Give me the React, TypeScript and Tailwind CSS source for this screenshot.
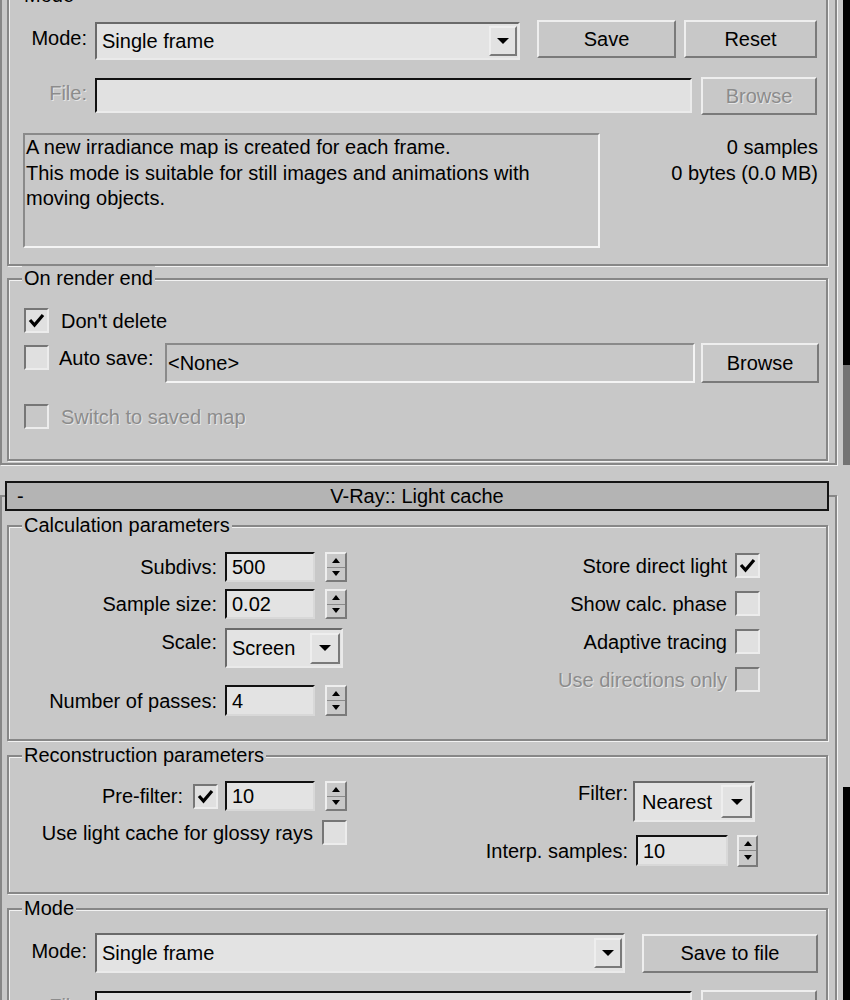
import React from 'react'

const raised = 'border-2 border-t-[#eeeeee] border-l-[#eeeeee] border-b-[#7a7a7a] border-r-[#7a7a7a]'
const dis = 'text-[#8c8c8c] [text-shadow:1px_1px_0_#e6e6e6]'

function Group({ title, className, children }: { title: string; className: string; children?: React.ReactNode }) {
  return (
    <div className={`border-2 border-[#878787] shadow-[inset_1px_1px_0_#f2f2f2,1px_1px_0_#f2f2f2] ${className}`}>
      <div className="-mt-[14px] h-[24px] flex">
        <span className="ml-[13px] px-[2px] bg-[#c8c8c8]">{title}</span>
      </div>
      {children}
    </div>
  )
}

function Btn({ children, className, disabled }: { children: React.ReactNode; className: string; disabled?: boolean }) {
  return (
    <div className={`flex items-center justify-center bg-[#c8c8c8] ${raised} ${disabled ? dis : ''} ${className}`}>
      {children}
    </div>
  )
}

function Tri({ down = true, w = 12, h = 6 }: { down?: boolean; w?: number; h?: number }) {
  return (
    <svg width={w} height={h} viewBox={`0 0 ${w} ${h}`}>
      <polygon points={down ? `0,0 ${w},0 ${w / 2},${h}` : `0,${h} ${w},${h} ${w / 2},0`} fill="#000" />
    </svg>
  )
}

function Drop({ value, className, pad = 'pl-[5px]', btn = 'w-[28px] h-[30px]' }: { value: string; className: string; pad?: string; btn?: string }) {
  return (
    <div className={`flex items-center border-2 border-t-[#6a6a6a] border-l-[#6a6a6a] border-b-[#eaeaea] border-r-[#eaeaea] bg-[#e3e3e3] ${className}`}>
      <span className={`flex-1 ${pad}`}>{value}</span>
      <div className={`flex items-center justify-center bg-[#e2e2e2] mr-[1px] ${raised} ${btn}`}>
        <Tri />
      </div>
    </div>
  )
}

function Num({ value, className = 'w-[90px] h-[30px]' }: { value: string; className?: string }) {
  return (
    <div className={`flex items-center pl-[5px] bg-[#e3e3e3] border-2 border-t-[#111111] border-l-[#111111] border-b-[#d8d8d8] border-r-[#d8d8d8] ${className}`}>
      {value}
    </div>
  )
}

function Spin({ className = 'ml-[10px] h-[30px] w-[22px]' }: { className?: string }) {
  return (
    <div className={`flex flex-col bg-[#c8c8c8] ${raised} ${className}`}>
      <div className="flex-1 flex items-center justify-center border-b border-[#8a8a8a]">
        <Tri down={false} w={8} h={5} />
      </div>
      <div className="flex-1 flex items-center justify-center">
        <Tri w={8} h={5} />
      </div>
    </div>
  )
}

function Check({ checked, disabled, className = '' }: { checked?: boolean; disabled?: boolean; className?: string }) {
  return (
    <div className={`w-[25px] h-[25px] shrink-0 flex items-center justify-center border-2 border-t-[#767676] border-l-[#767676] border-b-[#ececec] border-r-[#ececec] ${disabled ? 'bg-[#c8c8c8]' : 'bg-[#e0e0e0]'} ${className}`}>
      {checked && (
        <svg width="17" height="15" viewBox="0 0 17 15">
          <polyline points="2,7 6.5,12 15,2" fill="none" stroke="#000" strokeWidth="3.2" />
        </svg>
      )}
    </div>
  )
}

export default function App() {
  return (
    <div className="w-[850px] h-[1000px] overflow-hidden flex bg-[#c8c8c8] text-black text-[20px] leading-[24px] font-['Liberation_Sans',Arial,sans-serif]">
      <div className="w-[843px] shrink-0">
        {/* irradiance map rollout (cut) */}
        <div className="w-[837px] border-l-2 border-r-2 border-b-2 border-[#878787] shadow-[1px_1px_0_#f2f2f2] pb-[2px]">
          <Group title="Mode" className="ml-[5px] -mt-[5px] w-[821px] h-[271px]">
            <div className="flex items-start mt-[13px]">
              <span className="w-[78px] text-right mt-[6px]">Mode:</span>
              <Drop value="Single frame" className="ml-[8px] mt-[2px] w-[425px] h-[38px]" />
              <Btn className="ml-[17px] w-[139px] h-[38px]">Save</Btn>
              <Btn className="ml-[8px] w-[133px] h-[38px]">Reset</Btn>
            </div>
            <div className="flex items-start mt-[17px]">
              <span className={`w-[78px] text-right mt-[4px] ${dis}`}>File:</span>
              <div className="ml-[8px] mt-[1px] w-[597px] h-[35px] bg-[#e1e1e1] border-2 border-t-[#111111] border-l-[#111111] border-b-[#ebebeb] border-r-[#ebebeb]" />
              <Btn disabled className="ml-[9px] w-[116px] h-[38px]">Browse</Btn>
            </div>
            <div className="flex items-start mt-[18px]">
              <div className="ml-[14px] w-[577px] h-[115px] pl-[1px] leading-[25.5px] border-2 border-t-[#8a8a8a] border-l-[#8a8a8a] border-b-[#f4f4f4] border-r-[#f4f4f4]">
                A new irradiance map is created for each frame.
                <br />
                This mode is suitable for still images and animations with
                <br />
                moving objects.
              </div>
              <div className="flex-1 text-right pr-[8px] mt-[1px] leading-[26px]">
                <div>0 samples</div>
                <div>0 bytes (0.0 MB)</div>
              </div>
            </div>
          </Group>

          <Group title="On render end" className="ml-[5px] mt-[12px] w-[821px] h-[183px]">
            <div className="flex items-center h-[25px] mt-[18px] ml-[15px]">
              <Check checked />
              <span className="ml-[12px]">Don't delete</span>
            </div>
            <div className="flex items-start h-[40px] mt-[10px] ml-[15px]">
              <Check className="mt-[2px]" />
              <span className="ml-[10px] mt-[3px] w-[100px]">Auto save:</span>
              <div className="ml-[6px] w-[530px] h-[40px] flex items-center pl-[1px] border-2 border-t-[#8a8a8a] border-l-[#8a8a8a] border-b-[#f4f4f4] border-r-[#f4f4f4]">
                &lt;None&gt;
              </div>
              <Btn className="ml-[6px] w-[118px] h-[40px]">Browse</Btn>
            </div>
            <div className="flex items-center h-[25px] mt-[21px] ml-[15px]">
              <Check disabled />
              <span className={`ml-[12px] ${dis}`}>Switch to saved map</span>
            </div>
          </Group>
        </div>

        {/* light cache rollout */}
        <div className="w-[837px] mt-[30px] border-2 border-[#878787] shadow-[1px_1px_0_#f2f2f2] h-[600px]">
          <div className="-mt-[16px] ml-[3px] w-[824px] h-[30px] border-2 border-[#141414] bg-[#b4b4b4] grid grid-cols-[1fr_auto_1fr] items-center">
            <span className="pl-[10px]">-</span>
            <span>V-Ray:: Light cache</span>
            <span />
          </div>

          <Group title="Calculation parameters" className="ml-[5px] mt-[14px] w-[821px] h-[216px]">
            <div className="flex justify-between mt-[15px]">
              <div className="flex flex-col">
                <div className="flex items-center h-[30px]">
                  <span className="w-[208px] text-right">Subdivs:</span>
                  <Num value="500" className="ml-[8px] w-[90px] h-[30px]" />
                  <Spin />
                </div>
                <div className="flex items-center h-[30px] mt-[7px]">
                  <span className="w-[208px] text-right">Sample size:</span>
                  <Num value="0.02" className="ml-[8px] w-[90px] h-[30px]" />
                  <Spin />
                </div>
                <div className="flex items-start h-[40px] mt-[9px]">
                  <span className="w-[208px] text-right mt-[2px]">Scale:</span>
                  <Drop value="Screen" className="ml-[8px] w-[118px] h-[40px]" pad="pl-[5px]" btn="w-[30px] h-[31px]" />
                </div>
                <div className="flex items-center h-[31px] mt-[17px]">
                  <span className="w-[208px] text-right">Number of passes:</span>
                  <Num value="4" className="ml-[8px] w-[90px] h-[31px]" />
                  <Spin className="ml-[10px] h-[31px] w-[22px]" />
                </div>
              </div>
              <div className="flex flex-col items-end gap-[13px] mr-[66px] mt-[1px]">
                <div className="flex items-center h-[25px]">
                  <span>Store direct light</span>
                  <Check checked className="ml-[8px]" />
                </div>
                <div className="flex items-center h-[25px]">
                  <span>Show calc. phase</span>
                  <Check className="ml-[8px]" />
                </div>
                <div className="flex items-center h-[25px]">
                  <span>Adaptive tracing</span>
                  <Check className="ml-[8px]" />
                </div>
                <div className="flex items-center h-[25px]">
                  <span className={dis}>Use directions only</span>
                  <Check disabled className="ml-[8px]" />
                </div>
              </div>
            </div>
          </Group>

          <Group title="Reconstruction parameters" className="ml-[5px] mt-[14px] w-[821px] h-[139px]">
            <div className="flex justify-between mt-[14px]">
              <div className="flex flex-col items-end w-[338px]">
                <div className="flex items-center h-[30px]">
                  <span>Pre-filter:</span>
                  <Check checked className="ml-[10px]" />
                  <Num value="10" className="ml-[7px] w-[90px] h-[30px]" />
                  <Spin />
                </div>
                <div className="flex items-center h-[25px] mt-[9px]">
                  <span>Use light cache for glossy rays</span>
                  <Check className="ml-[9px]" />
                </div>
              </div>
              <div className="flex flex-col items-end mr-[68px]">
                <div className="flex items-start h-[41px]">
                  <span>Filter:</span>
                  <Drop value="Nearest" className="ml-[5px] mr-[3px] w-[122px] h-[41px]" pad="pl-[7px]" btn="w-[31px] h-[33px]" />
                </div>
                <div className="flex items-center h-[31px] mt-[13px]">
                  <span>Interp. samples:</span>
                  <Num value="10" className="ml-[8px] w-[92px] h-[31px]" />
                  <Spin className="ml-[9px] h-[32px] w-[21px]" />
                </div>
              </div>
            </div>
          </Group>

          <Group title="Mode" className="ml-[5px] mt-[14px] w-[821px] h-[200px]">
            <div className="flex items-center mt-[13px]">
              <span className="w-[78px] text-right -mt-[5px]">Mode:</span>
              <Drop value="Single frame" className="ml-[8px] w-[530px] h-[40px]" />
              <Btn className="ml-[17px] w-[176px] h-[39px]">Save to file</Btn>
            </div>
            <div className="flex items-start mt-[17px]">
              <span className={`w-[78px] text-right mt-[4px] ${dis}`}>File:</span>
              <div className="ml-[8px] mt-[1px] w-[597px] h-[35px] bg-[#e1e1e1] border-2 border-t-[#111111] border-l-[#111111] border-b-[#ebebeb] border-r-[#ebebeb]" />
              <Btn disabled className="ml-[9px] w-[116px] h-[38px]">Browse</Btn>
            </div>
          </Group>
        </div>
      </div>

      {/* scrollbar strip */}
      <div className="w-[7px] flex flex-col">
        <div className="h-[365px] bg-black" />
        <div className="h-[100px] bg-[#737373]" />
        <div className="h-[322px] bg-[#c8c8c8]" />
        <div className="flex-1 bg-black" />
      </div>
    </div>
  )
}
